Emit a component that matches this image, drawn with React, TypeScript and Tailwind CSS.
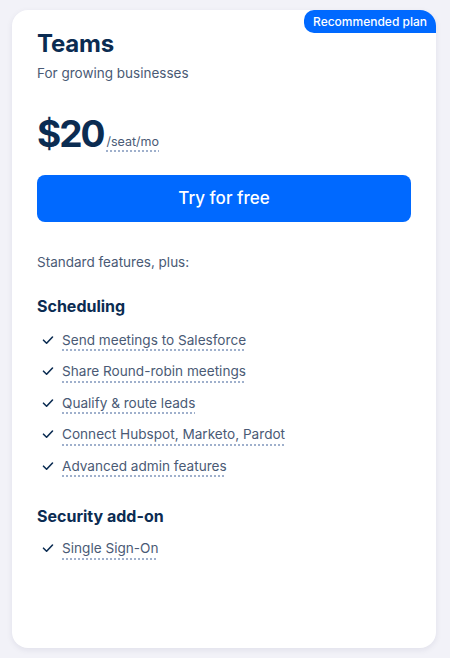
const FONT = { fontFamily: 'Inter, "Noto Sans", sans-serif' };

const Check = () => (
  <svg width="12" height="12" viewBox="0 0 12 12" className="shrink-0" fill="none">
    <path d="M1.5 6.2 L4.6 9.2 L10.5 3" stroke="#0b2c52" strokeWidth="1.6" strokeLinecap="round" strokeLinejoin="round" />
  </svg>
);

const Feature = ({ label }: { label: string }) => (
  <li className="flex items-center gap-[8px] h-[31.5px]">
    <span className="pl-[5px] flex items-center">
      <Check />
    </span>
    <span className="text-[13.6px] text-[#4a5a75] leading-[20px] underline decoration-dotted decoration-[#9fb0cc] decoration-2 underline-offset-[5px]">
      {label}
    </span>
  </li>
);

const scheduling = [
  'Send meetings to Salesforce',
  'Share Round-robin meetings',
  'Qualify & route leads',
  'Connect Hubspot, Marketo, Pardot',
  'Advanced admin features',
];

function App() {
  return (
    <div className="w-[450px] h-[658px] bg-[#f2f2f8] pt-[10px] pl-[12px]" style={FONT}>
      <div className="relative w-[424px] h-[638px] bg-white rounded-[16px] shadow-[0_2px_6px_rgba(20,30,80,0.08)] px-[25px] pt-[19px]">
        <div className="absolute top-0 right-0 h-[23px] px-[9px] bg-[#0069ff] text-white text-[12px] font-medium leading-[23px] rounded-tr-[16px] rounded-bl-[10px] rounded-tl-[10px]">
          Recommended plan
        </div>
        <h2 className="text-[24px] font-bold text-[#0b2c52] leading-[30px] tracking-[-0.2px]">Teams</h2>
        <p className="mt-[4px] text-[13.5px] text-[#4a5a75] leading-[20px]">For growing businesses</p>
        <div className="mt-[29px] flex items-end gap-[3px]">
          <span className="text-[37px] font-bold text-[#0b2c52] leading-[44px] tracking-[-2px]">$20</span>
          <span className="mb-[6px] text-[12.5px] text-[#4a5a75] leading-[16px] underline decoration-dotted decoration-[#9fb0cc] decoration-2 underline-offset-[4px]">
            /seat/mo
          </span>
        </div>
        <button className="mt-[19px] w-full h-[47px] rounded-[8px] bg-[#0069ff] text-white text-[17px] font-medium">
          Try for free
        </button>
        <p className="mt-[30px] text-[13.5px] text-[#4a5a75] leading-[20px]">Standard features, plus:</p>
        <h3 className="mt-[24px] text-[16px] font-bold text-[#0b2c52] leading-[20px]">Scheduling</h3>
        <ul className="mt-[8px]">
          {scheduling.map((f) => (
            <Feature key={f} label={f} />
          ))}
        </ul>
        <h3 className="mt-[24px] text-[16px] font-bold text-[#0b2c52] leading-[20px]">Security add-on</h3>
        <ul className="mt-[7px]">
          <Feature label="Single Sign-On" />
        </ul>
      </div>
    </div>
  );
}

export default App;
